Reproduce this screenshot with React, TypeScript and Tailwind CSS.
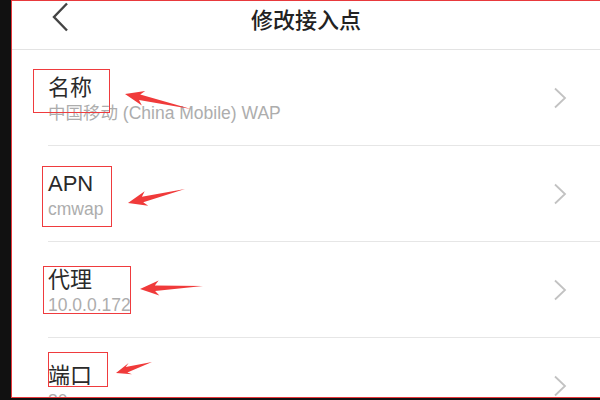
import React from 'react'

const rows = [
  { label: '名称', value: '中国移动 (China Mobile) WAP' },
  { label: 'APN', value: 'cmwap' },
  { label: '代理', value: '10.0.0.172' },
  { label: '端口', value: '80' },
]

// red annotation boxes drawn over the screenshot
const boxes = [
  'left-[33px] top-[69px] w-[77px] h-[44px]',
  'left-[42px] top-[166px] w-[70px] h-[61px]',
  'left-[43px] top-[266px] w-[88px] h-[48px]',
  'left-[48px] top-[352px] w-[60px] h-[35px]',
]

const arrows = [
  { tip: [125, 94], tail: [191, 109], head: 19, wing: 7.5 },
  { tip: [128, 203], tail: [185, 189], head: 19, wing: 7.5 },
  { tip: [140, 289], tail: [203, 286], head: 19, wing: 7.5 },
  { tip: [116, 373], tail: [152, 362], head: 15, wing: 6 },
]

function arrowPoints(a: { tip: number[]; tail: number[]; head: number; wing: number }) {
  const [tx, ty] = a.tip
  const [ex, ey] = a.tail
  const len = Math.hypot(ex - tx, ey - ty)
  const ux = (ex - tx) / len
  const uy = (ey - ty) / len
  const nx = -uy
  const ny = ux
  const p = (d: number, w: number) => `${tx + ux * d + nx * w},${ty + uy * d + ny * w}`
  return [
    p(0, 0),
    p(a.head, a.wing),
    p(a.head - 4, 2.8),
    `${ex},${ey}`,
    p(a.head - 4, -2.8),
    p(a.head, -a.wing),
  ].join(' ')
}

function ChevronRight() {
  return (
    <svg width="14" height="22" viewBox="0 0 14 22" fill="none">
      <path d="M2 1.5 L12 11 L2 20.5" stroke="#c2c2c2" strokeWidth="1.8" />
    </svg>
  )
}

export default function App() {
  return (
    <div className="relative w-[600px] h-[400px] bg-[#111111] flex overflow-hidden font-['Liberation_Sans','Noto_Sans_CJK_SC',sans-serif]">
      <div className="w-[11px] shrink-0" />
      <div className="flex-1 h-[398px] bg-white border-l border-t border-b border-[#e8393c] overflow-hidden">
        {/* Header */}
        <div className="relative h-[49px] border-b border-[#e3e3e3] flex items-center justify-center">
          <svg className="absolute left-[40px] top-[1px]" width="18" height="30" viewBox="0 0 18 30" fill="none">
            <path d="M15 1.5 L2 15 L15 28.5" stroke="#444" strokeWidth="2.4" />
          </svg>
          <h1 className="text-[22px] leading-[28px] text-[#222] font-medium -mt-[8px]">修改接入点</h1>
        </div>

        {/* Settings rows */}
        <div className="ml-[36px]">
          {rows.map((row) => (
            <div key={row.label} className="h-[96px] border-b border-[#e6e6e6] flex items-start pr-[33px]">
              <div className="flex-1 pt-[24px]">
                <p className="text-[22px] leading-[28px] text-[#2a2a2a]">{row.label}</p>
                <p className="text-[17.5px] leading-[22px] text-[#adadad]">{row.value}</p>
              </div>
              <div className="pt-[37px]">
                <ChevronRight />
              </div>
            </div>
          ))}
        </div>
      </div>

      {/* Annotations */}
      {boxes.map((b) => (
        <div key={b} className={`absolute border border-[#ef3b3e] ${b}`} />
      ))}
      <svg className="absolute inset-0 pointer-events-none" width="600" height="400">
        {arrows.map((a, i) => (
          <polygon key={i} points={arrowPoints(a)} fill="#f03a3a" />
        ))}
      </svg>
    </div>
  )
}
